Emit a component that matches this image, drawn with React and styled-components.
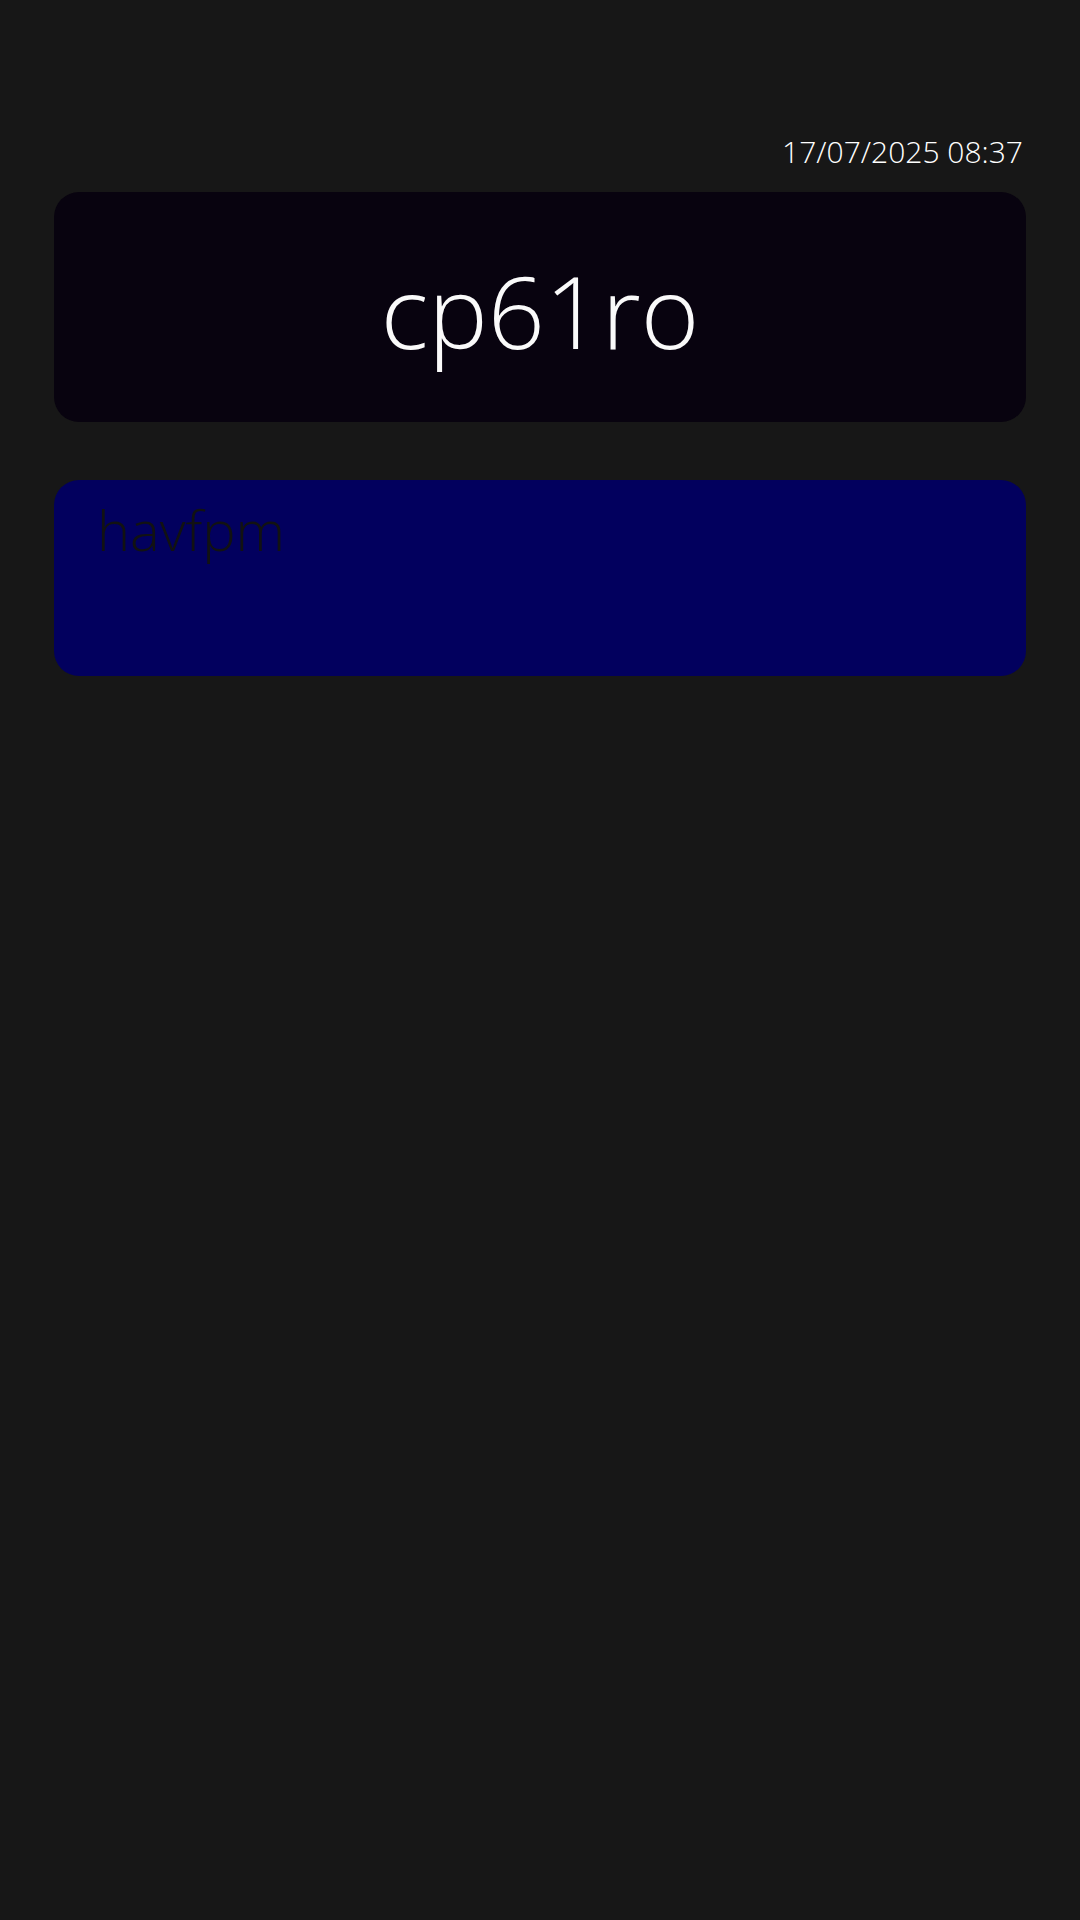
import React from 'react'
import styled, { createGlobalStyle } from 'styled-components'

const Global = createGlobalStyle`
  html, body {
    margin: 0;
    padding: 0;
    background: #171717;
  }
  body {
    font-family: "Open Sans", "Noto Sans", sans-serif;
  }
`

const Page = styled.div`
  min-height: 1920px;
  padding: 132px 54px 0;
  box-sizing: border-box;
  display: flex;
  flex-direction: column;
`

const Stamp = styled.div`
  align-self: flex-end;
  margin-right: 3px;
  font-size: 30px;
  font-weight: 300;
  line-height: 40px;
  color: #ffffff;
`

const Card = styled.div`
  background: ${p => p.$bg};
  border-radius: 25px;
  height: ${p => p.$h}px;
  box-sizing: border-box;
  margin-top: ${p => p.$mt}px;
  display: flex;
  flex-direction: column;
  justify-content: ${p => (p.$center ? 'center' : 'flex-start')};
  align-items: ${p => (p.$center ? 'center' : 'flex-start')};
  padding: ${p => (p.$center ? '0' : '16px 43px')};
`

const Title = styled.div`
  font-size: 100px;
  font-weight: 300;
  line-height: 1;
  color: #fafafa;
  margin-top: 5px;
`

const Label = styled.div`
  font-size: 56px;
  font-weight: 300;
  line-height: 1.2;
  color: #121212;
`

export default function App() {
  return (
    <>
      <Global />
      <Page>
        <Stamp>17/07/2025 08:37</Stamp>
        <Card $bg="#08030f" $h={230} $mt={20} $center>
          <Title>cp61ro</Title>
        </Card>
        <Card $bg="#02005e" $h={196} $mt={58}>
          <Label>havfpm</Label>
        </Card>
      </Page>
    </>
  )
}
